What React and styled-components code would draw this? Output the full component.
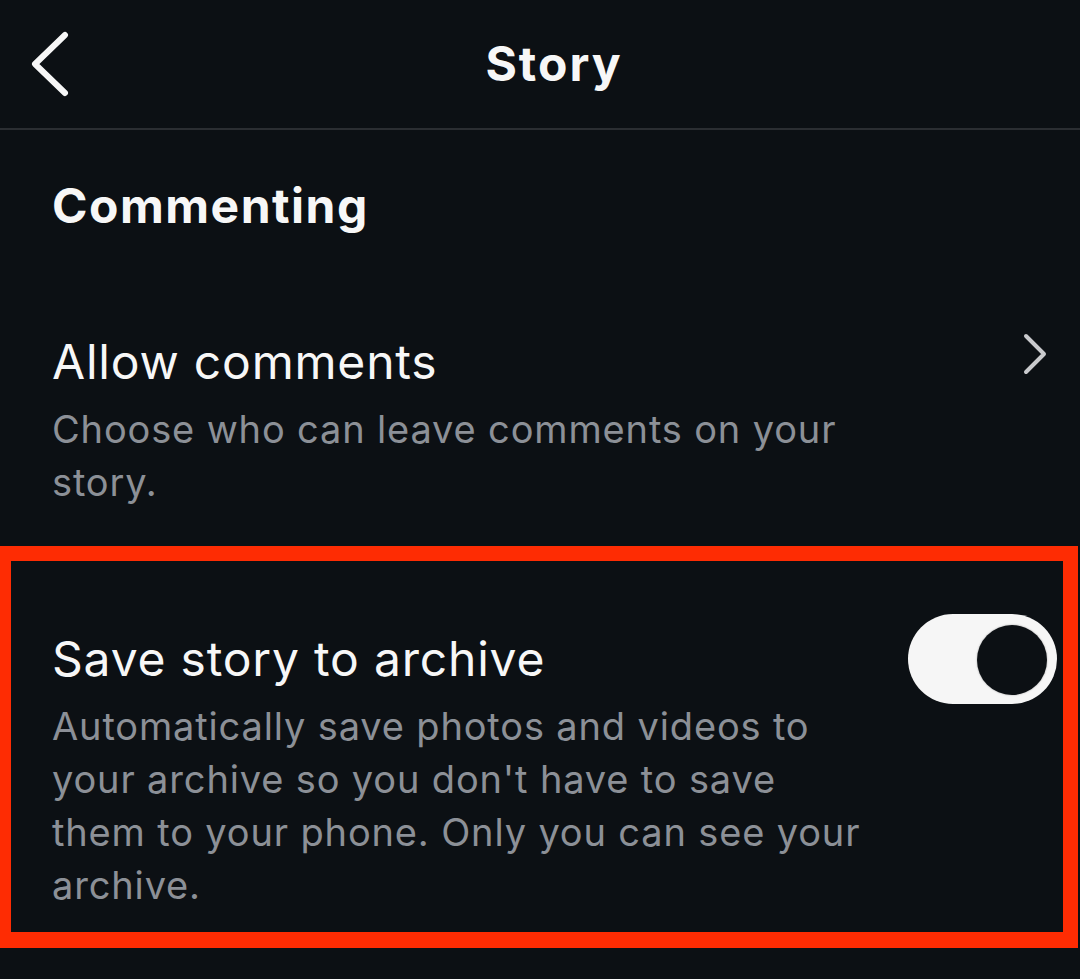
import React from "react";
import styled, { createGlobalStyle } from "styled-components";

const Global = createGlobalStyle`
  html, body { margin: 0; padding: 0; background: #0c1014; }
  body { font-family: Inter, "Noto Sans", "Liberation Sans", sans-serif; color: #f5f5f5; }
`;

const Page = styled.div`
  width: 1080px;
  height: 979px;
  background: #0c1014;
  overflow: hidden;
`;

const Header = styled.header`
  height: 128px;
  border-bottom: 2px solid #2b2e32;
  display: grid;
  grid-template-columns: 120px 1fr 120px;
  align-items: center;
`;

const BackButton = styled.button`
  background: none;
  border: 0;
  padding: 0 0 0 29px;
  display: flex;
  align-items: center;
  height: 100%;
  cursor: pointer;
`;

const Title = styled.h1`
  margin: 0;
  padding: 0 0 0 28px;
  text-align: center;
  font-size: 48px;
  line-height: 56px;
  font-weight: 700;
  color: #f7f7f7;
  letter-spacing: 2px;
`;

const SectionTitle = styled.h2`
  margin: 0;
  padding: 48px 52px 0;
  font-size: 48px;
  font-weight: 700;
  line-height: 56px;
  color: #f7f7f7;
  letter-spacing: 1.5px;
`;

const Row = styled.div`
  display: flex;
  flex-direction: column;
  padding: ${(p) => p.$pad};
`;

const RowHead = styled.div`
  display: flex;
  align-items: center;
  justify-content: space-between;
`;

const RowLabel = styled.div`
  font-size: 48px;
  font-weight: 400;
  line-height: 56px;
  color: #f7f7f7;
  letter-spacing: 0.8px;
`;

const RowDesc = styled.div`
  margin-top: 13px;
  max-width: 815px;
  font-size: 38px;
  line-height: 53px;
  color: #8c9097;
  letter-spacing: 0.85px;
`;

const Highlight = styled.section`
  margin: 0 2px 0 0;
  border: 15px solid #fe2c03;
  border-left-width: 11px;
  border-bottom-width: 16px;
`;

const Toggle = styled.div`
  width: 149px;
  height: 90px;
  border-radius: 45px;
  background: #f6f6f6;
  position: relative;
  flex-shrink: 0;
  margin: -34px 0;
`;

const Knob = styled.div`
  position: absolute;
  top: 11px;
  right: 10px;
  width: 70px;
  height: 70px;
  border-radius: 50%;
  background: #0c1014;
  box-shadow: 0 0 2px rgba(0, 0, 0, 0.35);
`;

const Chevron = styled.svg`
  flex-shrink: 0;
  margin-top: -17px;
  margin-right: 29px;
`;

export default function App() {
  return (
    <Page>
      <Global />
      <Header>
        <BackButton aria-label="Back">
          <svg width="42" height="66" viewBox="0 0 42 66">
            <path d="M36 4 L6 33 L36 62" fill="none" stroke="#f7f7f7" strokeWidth="6" strokeLinecap="round" strokeLinejoin="round" />
          </svg>
        </BackButton>
        <Title>Story</Title>
        <div />
      </Header>
      <SectionTitle>Commenting</SectionTitle>
      <Row $pad="100px 0 37px 52px">
        <RowHead>
          <RowLabel>Allow comments</RowLabel>
          <Chevron width="30" height="46" viewBox="0 0 30 46">
            <path d="M5 5 L23 23 L5 41" fill="none" stroke="#c9cacd" strokeWidth="4" strokeLinecap="round" strokeLinejoin="round" />
          </Chevron>
        </RowHead>
        <RowDesc>Choose who can leave comments on your story.</RowDesc>
      </Row>
      <Highlight>
        <Row $pad="70px 6px 20px 41px">
          <RowHead>
            <RowLabel>Save story to archive</RowLabel>
            <Toggle>
              <Knob />
            </Toggle>
          </RowHead>
          <RowDesc>
            Automatically save photos and videos to your archive so you don't have to save them to your phone. Only you can see your archive.
          </RowDesc>
        </Row>
      </Highlight>
    </Page>
  );
}
